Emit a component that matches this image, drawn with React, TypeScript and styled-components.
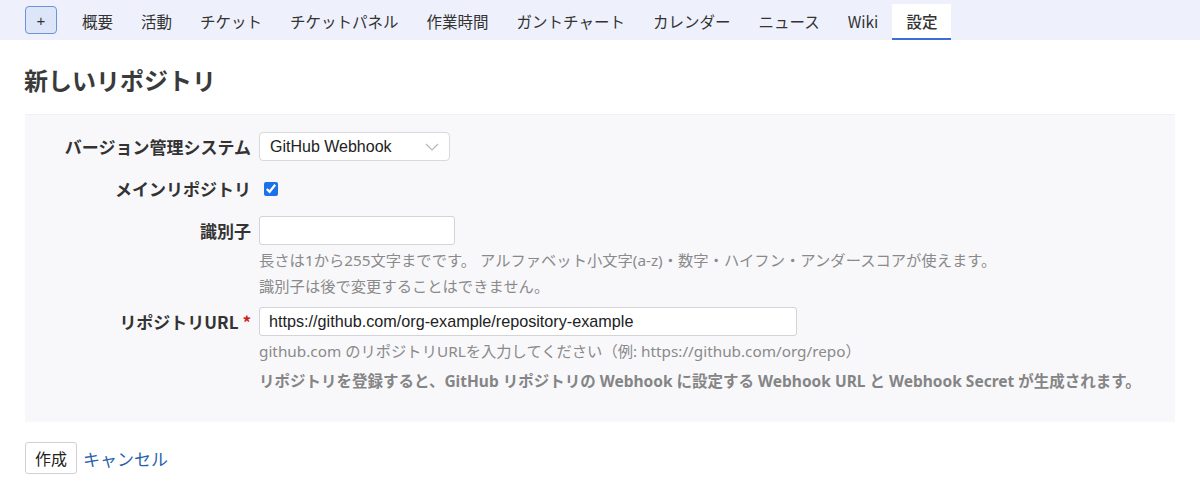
import React from 'react'
import styled, { createGlobalStyle } from 'styled-components'

const GlobalStyle = createGlobalStyle`
  html, body {
    margin: 0;
    padding: 0;
    background: #ffffff;
  }
  body {
    font-family: "Liberation Sans", "Noto Sans CJK JP", sans-serif;
    color: #333333;
  }
`

const tabs = ['概要', '活動', 'チケット', 'チケットパネル', '作業時間', 'ガントチャート', 'カレンダー', 'ニュース', 'Wiki', '設定']

export default function App() {
  return (
    <>
      <GlobalStyle />
      <NavBar>
        <PlusBtn>+</PlusBtn>
        <TabList>
          {tabs.map(t => (
            <Tab key={t} active={t === '設定'}>{t}</Tab>
          ))}
        </TabList>
      </NavBar>
      <Content>
        <Title>新しいリポジトリ</Title>
        <Box>
          <Row>
            <Label>バージョン管理システム</Label>
            <Field>
              <SelectBox>
                <span>GitHub Webhook</span>
                <svg width="14" height="8" viewBox="0 0 14 8" fill="none">
                  <path d="M1 1l6 6 6-6" stroke="#b8b8c0" strokeWidth="1.2" />
                </svg>
              </SelectBox>
            </Field>
          </Row>
          <Row>
            <Label>メインリポジトリ</Label>
            <Field>
              <Check type="checkbox" defaultChecked />
            </Field>
          </Row>
          <Row top>
            <Label>識別子</Label>
            <Field>
              <TextInput width={196} defaultValue="" />
              <Help>長さは1から255文字までです。 アルファベット小文字(a-z)・数字・ハイフン・アンダースコアが使えます。</Help>
              <Help>識別子は後で変更することはできません。</Help>
            </Field>
          </Row>
          <Row top tight>
            <Label>リポジトリURL <Req>*</Req></Label>
            <Field>
              <TextInput width={538} defaultValue="https://github.com/org-example/repository-example" />
              <Help>github.com のリポジトリURLを入力してください（例: https://github.com/org/repo）</Help>
              <Note>リポジトリを登録すると、GitHub リポジトリの Webhook に設定する Webhook URL と Webhook Secret が生成されます。</Note>
            </Field>
          </Row>
        </Box>
        <Actions>
          <SubmitBtn>作成</SubmitBtn>
          <CancelLink href="#">キャンセル</CancelLink>
        </Actions>
      </Content>
    </>
  )
}

const NavBar = styled.div`
  display: flex;
  align-items: stretch;
  height: 40px;
  padding-left: 25px;
  background: #eef1fb;
`
const PlusBtn = styled.button`
  align-self: center;
  width: 32px;
  height: 28px;
  margin-right: 11px;
  padding: 0;
  border: 1px solid #6f93d9;
  border-radius: 4px;
  background: #dde5f8;
  color: #333;
  font-size: 15px;
  font-family: "Liberation Sans", sans-serif;
`
const TabList = styled.div`
  display: flex;
  align-items: stretch;
  padding-top: 4px;
`
const Tab = styled.div<{ active?: boolean }>`
  display: flex;
  align-items: center;
  padding: 0 14px;
  font-size: 15.5px;
  color: #333;
  font-family: "Noto Sans CJK JP", sans-serif;
  background: ${p => (p.active ? '#ffffff' : 'transparent')};
  border-bottom: 2px solid ${p => (p.active ? '#3b6fd4' : 'transparent')};
  font-weight: ${p => (p.active ? 500 : 400)};
`
const Content = styled.div`
  padding: 0 25px;
`
const Title = styled.h2`
  margin: 24px 0 18px -1px;
  font-size: 24px;
  line-height: 32px;
  font-weight: 700;
  color: #3a3a3a;
  font-family: "Noto Sans CJK JP", sans-serif;
`
const Box = styled.div`
  display: flex;
  flex-direction: column;
  gap: 13px;
  padding: 17px 0 28px;
  background: #f8f8fb;
  border-top: 1px solid #f0f0f4;
`
const Row = styled.div<{ top?: boolean; tight?: boolean }>`
  display: flex;
  align-items: ${p => (p.top ? 'flex-start' : 'center')};
  min-height: 28px;
  margin-top: ${p => (p.tight ? '-5px' : '0')};
`
const Label = styled.label`
  flex: 0 0 226px;
  padding-right: 8px;
  text-align: right;
  font-size: 17px;
  line-height: 29px;
  font-weight: 700;
  color: #333;
  font-family: "Noto Sans CJK JP", sans-serif;
`
const Req = styled.span`
  color: #cc2222;
`
const Field = styled.div`
  display: flex;
  flex-direction: column;
  align-items: flex-start;
`
const SelectBox = styled.div`
  display: flex;
  align-items: center;
  justify-content: space-between;
  box-sizing: border-box;
  width: 191px;
  height: 29px;
  padding: 0 10px 0 10px;
  background: #fff;
  border: 1px solid #d8d8dd;
  border-radius: 4px;
  font-size: 16px;
  color: #222;
`
const Check = styled.input`
  width: 14px;
  height: 14px;
  margin: 0 0 0 5px;
  accent-color: #1a73e8;
`
const TextInput = styled.input<{ width: number }>`
  box-sizing: border-box;
  width: ${p => p.width}px;
  height: 29px;
  padding: 0 9px;
  background: #fff;
  border: 1px solid #d3d3d8;
  border-radius: 3px;
  font-size: 16.2px;
  font-family: "Liberation Sans", sans-serif;
  color: #222;
  outline: none;
`
const Help = styled.div`
  font-size: 15.3px;
  line-height: 26px;
  color: #8a8a8a;
  font-family: "Noto Sans", "Noto Sans CJK JP", sans-serif;
  &:first-of-type {
    margin-top: 2px;
  }
`
const Note = styled.div`
  margin-top: 4px;
  font-size: 15.5px;
  line-height: 26px;
  font-weight: 700;
  color: #858585;
  font-family: "Noto Sans", "Noto Sans CJK JP", sans-serif;
`
const Actions = styled.div`
  display: flex;
  align-items: center;
  gap: 6px;
  margin-top: 20px;
`
const SubmitBtn = styled.button`
  height: 32px;
  padding: 0 9px;
  background: #fff;
  border: 1px solid #cfcfd4;
  border-radius: 3px;
  font-size: 16px;
  color: #222;
  font-family: "Noto Sans CJK JP", sans-serif;
`
const CancelLink = styled.a`
  font-size: 17px;
  color: #2a5fae;
  text-decoration: none;
  font-family: "Noto Sans CJK JP", sans-serif;
`
